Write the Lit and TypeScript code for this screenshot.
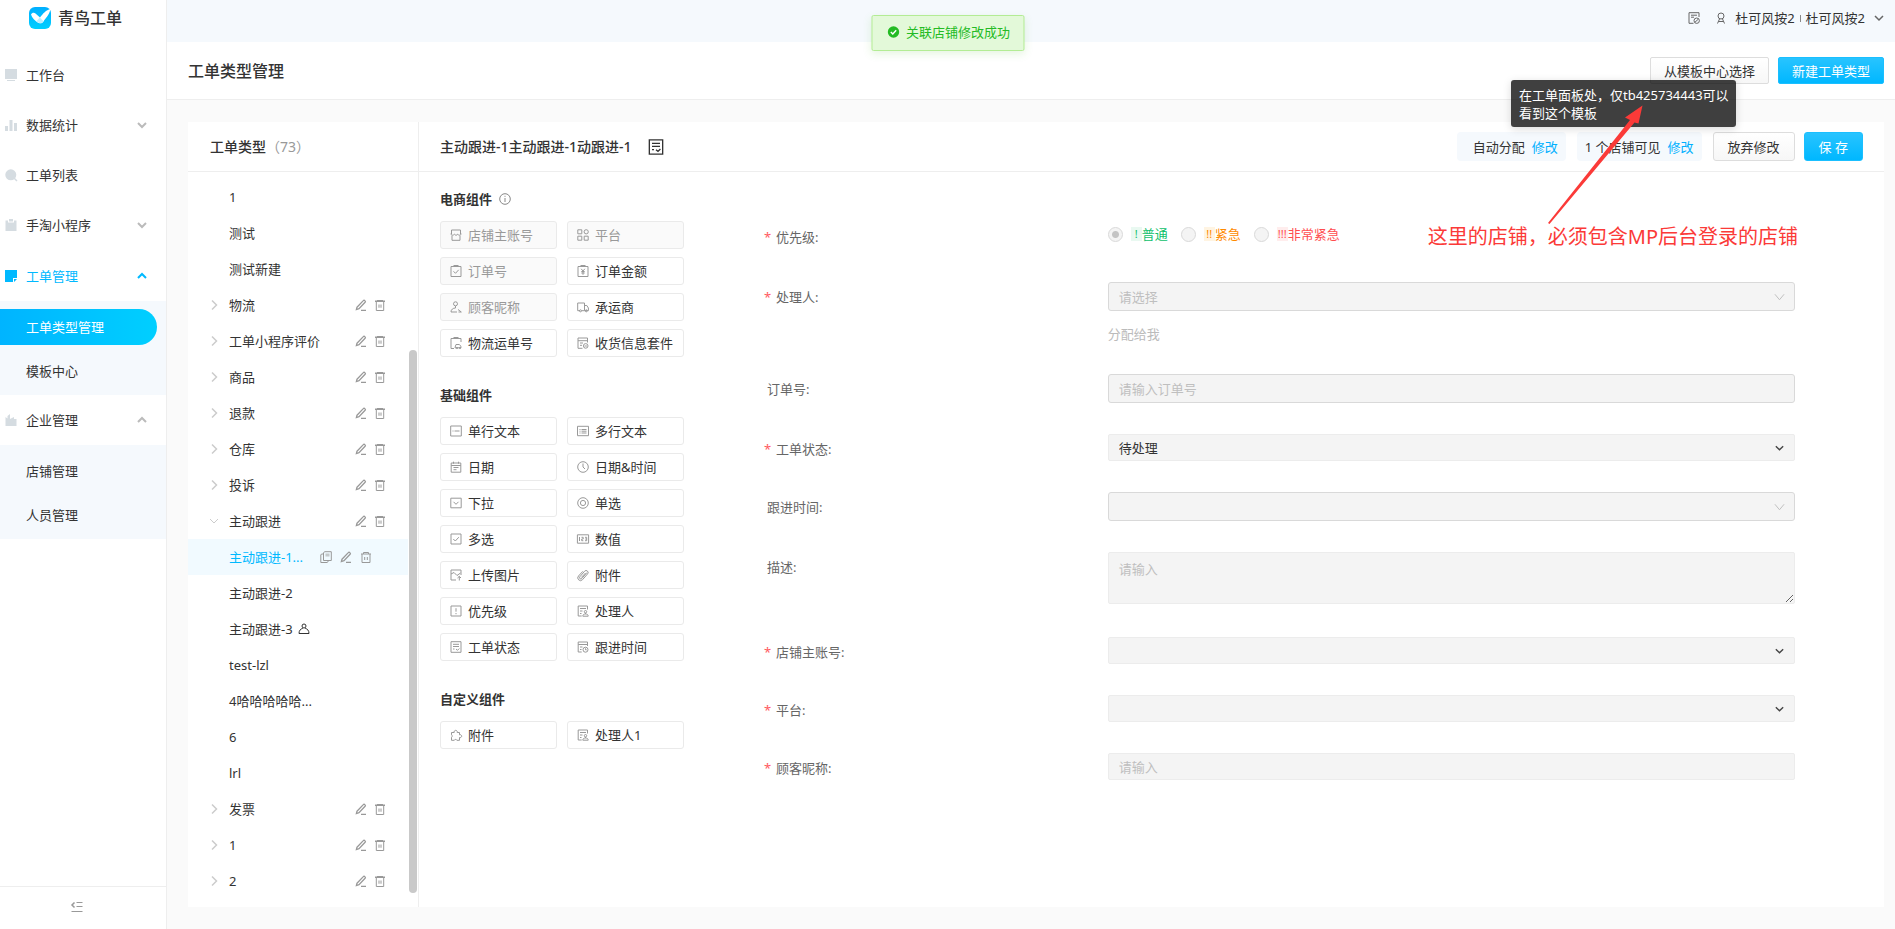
import { LitElement, html, svg, css, nothing } from "lit";
import { customElement } from "lit/decorators.js";
import { classMap } from "lit/directives/class-map.js";

const paths: Record<string, unknown> = {
  down: svg`<path d="M2 4l4 4 4-4"/>`,
  wide: svg`<path d="M1 3l5 6 5-6"/>`,
  up: svg`<path d="M2 8l4-4 4 4"/>`,
  right: svg`<path stroke-width="1.500" d="M4 1.500l4.500 4.500L4 10.500"/>`,
  monitor: svg`<path class="fill" d="M0 0h12v10H0zM2 11h8v1H2z"/>`,
  chart: svg`<path class="fill" d="M0 7h3v5H0zM4.500 1h3v11h-3zM9 4h3v8H9z"/>`,
  search: svg`<circle class="fill" cx="5.800" cy="5.800" r="5.500"/><path d="M9 9l3 3" stroke-width="1.500"/>`,
  clip: svg`<path class="fill" d="M.5 1.500H3v2h6v-2h2.500V12H.5zM4 0h4v2.500H4z"/>`,
  note: svg`<path class="fill" d="M0 0h12v8H8v4H0zM9 9h3l-3 3z"/>`,
  factory: svg`<path class="fill" d="M.5 12V3l2 1.500V2L5 0v5l4-2v2h2.500v7z"/>`,
  edit: svg`<path stroke-width="1.300" d="M2 8.200L8.300 1.600a1 1 0 0 1 1.500 0l.3.300a1 1 0 0 1 0 1.400L4 9.700l-2.600.8zM6 11.300h5"/>`,
  trash: svg`<path d="M1 2.500h10M3 1.500h6M2.300 2.500v9h7.400v-9"/><path class="fill soft" d="M1 1h10v2H1zM4 5.500h4v3.200H4z"/>`,
  bin: svg`<path d="M1 3h10M3.500 3V1.500h5V3M2 3v8.500h8V3M4.700 6v3M7.300 6v3"/>`,
  copy: svg`<path d="M4.500.7h6.800v8.800H3.500V2zM3.500 3H1.500L.8 4v7.500h6.500l1-1.500"/><path class="fill soft" d="M5.500 2.500h4v3h-4z"/>`,
  person: svg`<circle cx="6" cy="3" r="2"/><path d="M4.800 5.300C2.500 6 1 7.500 1 10.500h10C11 7.500 9.500 6 7.200 5.300"/>`,
  user: svg`<circle cx="6" cy="4" r="3"/><path d="M2.500 11.500l2-4.500M9.500 11.500L7.500 7M3.500 9.500h5"/>`,
  docblock: svg`<path d="M11 5V.7H1v10.600h4.500M3 3.200h6M3 5.200h3"/><circle cx="8.700" cy="8.700" r="2.700"/><path d="M7 10.200l3.300-3"/>`,
  form: svg`<path d="M1 .7h10v10.600H1zM3 3.300h6M3 5.500h6M3 8h1.500M6 8l1.500 1.300L9.300 7.500"/>`,
  info: svg`<circle cx="6" cy="6" r="5.300"/><path d="M6 5v4M6 2.800v1"/>`,
  shop: svg`<path d="M1.500 5V1h9v4M1 5.200c.5 1.300 2.500 1.300 3.300 0 .8 1.300 2.700 1.300 3.500 0 .8 1.300 2.700 1.300 3.200 0V4.500M1 4.500v.7M2 6.500v4.800h8V6.500"/>`,
  grid: svg`<path d="M.8.800h4v4h-4zM.8 7.200h4v4h-4zM7.200 7.200h4v4h-4z"/><circle cx="9.200" cy="2.800" r="2.100"/>`,
  ordercheck: svg`<path d="M1 1.500h10v10H1zM3.500.5h5M3.500 6.300l2 2 3.200-3.500"/>`,
  yen: svg`<path d="M1 1.500h10v10H1zM3.500.5h5M4.200 3.800L6 6l1.800-2.200M6 6v3.800M4.300 6.500h3.400M4.300 8h3.400"/>`,
  customer: svg`<circle cx="5.500" cy="2.800" r="2"/><path d="M5.500 5v2M5.500 7C3 7 1 8.500 1 11h6M8 8.500L11.300 11H8.500"/>`,
  truck: svg`<path d="M3 9.700H.7V2h6.800v7.700H4.600M7.500 4.500h2.300L11.400 7v2.700H7.500"/><circle cx="3.500" cy="9.800" r="1"/><circle cx="9.300" cy="9.800" r="1"/>`,
  waybill: svg`<path d="M4 11.500H1v-10h10V5M3.500.5h5M5 10.500l1-3h3.200l1.800 1.800v1.500H5z"/><circle cx="7" cy="11" r=".7"/><circle cx="10" cy="11" r=".7"/>`,
  receipt: svg`<path d="M10.500 5.500V1H1v10.300h4.500M1 3.700h9.500M3 6h3M3 8.300h2"/><circle cx="8.700" cy="8.900" r="2.300"/><path d="M7.500 9h2.400"/>`,
  line: svg`<path d="M.7 1h10.600v10H.7zM2.500 6h1M4.500 6h5"/>`,
  lines: svg`<path d="M.5 1.300h11v9.400H.5zM2.500 4.500h1M4.500 4.500h5M2.500 6.200h1M4.500 6.200h5M2.500 8h1M4.500 8h5"/>`,
  calendar: svg`<path d="M1.200 2h9.600v9.200H1.200zM1.200 4.500h9.600M3.500.700v2M8.500.700v2M3.500 6.500h5M3.500 8.700h3"/>`,
  clock: svg`<circle cx="6" cy="6" r="5.300"/><path d="M6 2.500V6l2 2"/>`,
  dropdown: svg`<path d="M.8 1.200h10.400v9.600H.8zM3.500 4.800L6 7.300l2.500-2.500"/>`,
  radio: svg`<circle cx="6" cy="6" r="5.300"/><circle cx="6" cy="6" r="2.600"/>`,
  check: svg`<path d="M1 1h10v10H1zM3.300 6l2 2 3.500-3.800"/>`,
  number: svg`<path d="M.4 1.800h11.200v8.400H.4zM2.500 4v4M4.500 4.300h1.700V6H4.700v1.700h1.600M8 4.300h1.700v3.400H8M8.200 6h1.500"/>`,
  image: svg`<path d="M6 11H1V1h10v5M1 5l3-1.500 3 3L10.500 4M9.300 11.500V7.500M7.500 9l1.800-1.700L11 9"/>`,
  attach: svg`<path d="M10 3.500L4.800 9.500a1.300 1.300 0 0 1-2-1.700L7.600 2.200a2 2 0 0 1 3 2.700L5.500 10.700a2.700 2.700 0 0 1-4-3.700L5.800 2.300M8.500 4L4.300 8.500"/>`,
  alert: svg`<path d="M1 1h10v10H1zM6 3.200v3.500M6 8v1.200"/>`,
  handler: svg`<path d="M10.500 4.500V1H1.200v10h3.500M3 3.500h6M3 6h2.500M3 8.500h1.500"/><circle cx="8.500" cy="6.700" r="1.200"/><path d="M8.500 8v1M5.800 11.200c0-1.500 1-2.200 2.700-2.200s2.700.7 2.700 2.200z"/>`,
  follow: svg`<path d="M10.500 5V1H1.200v10h3.500M1.200 3.500h9.300M3 6h2.500M3 8.500h1.500"/><circle cx="8.500" cy="8.700" r="2.500"/><path d="M8.500 7.300v1.500h1.200"/>`,
  puzzle: svg`<path d="M1.500 3.500h2.700a1.600 1.600 0 1 1 3 0H9.500v2.300a1.500 1.500 0 1 1 0 2.700v2.800H6.900a1.400 1.400 0 0 0-2.600 0H1.500V8.300a1.400 1.400 0 0 0 0-2.500z"/>`,
  collapse: svg`<path d="M5.500 1.500h6M5.500 5.500h6M.5 10.500h11"/><path stroke-width="1.500" d="M3.500 1.500L1 4l2.500 2.500"/>`,
};

const icon = (name: string, extra = "") => html`
  <svg class="icon ${extra}" viewBox="0 0 12 12" aria-hidden="true">${paths[name]}</svg>`;

type Row = { text: string; kind: "leaf" | "node" | "open" | "active"; mark?: boolean };
const leaf = (text: string, mark = false): Row => ({ text, kind: "leaf", mark });
const node = (text: string): Row => ({ text, kind: "node" });

const tree: Row[] = [
  leaf("1"), leaf("测试"), leaf("测试新建"),
  node("物流"), node("工单小程序评价"), node("商品"), node("退款"), node("仓库"), node("投诉"),
  { text: "主动跟进", kind: "open" },
  { text: "主动跟进-1...", kind: "active" },
  leaf("主动跟进-2"), leaf("主动跟进-3", true), leaf("test-lzl"), leaf("4哈哈哈哈哈..."), leaf("6"), leaf("lrl"),
  node("发票"), node("1"), node("2"),
];

type Part = [string, string, boolean?];
const groups: { title: string; info?: boolean; parts: Part[] }[] = [
  {
    title: "电商组件", info: true, parts: [
      ["shop", "店铺主账号", true], ["grid", "平台", true],
      ["ordercheck", "订单号", true], ["yen", "订单金额"],
      ["customer", "顾客昵称", true], ["truck", "承运商"],
      ["waybill", "物流运单号"], ["receipt", "收货信息套件"],
    ],
  },
  {
    title: "基础组件", parts: [
      ["line", "单行文本"], ["lines", "多行文本"], ["calendar", "日期"], ["clock", "日期&时间"],
      ["dropdown", "下拉"], ["radio", "单选"], ["check", "多选"], ["number", "数值"],
      ["image", "上传图片"], ["attach", "附件"], ["alert", "优先级"], ["handler", "处理人"],
      ["form", "工单状态"], ["follow", "跟进时间"],
    ],
  },
  { title: "自定义组件", parts: [["puzzle", "附件"], ["handler", "处理人1"]] },
];

@customElement("app-root")
export class AppRoot extends LitElement {
  static styles = css`
    :host {
      display: flex;
      position: relative;
      min-height: 100vh;
      background: #fafafa;
      color: #333;
      font: 13px/20px "Noto Sans", "Noto Sans CJK SC", sans-serif;
    }
    * { box-sizing: border-box; }
    button, input, select, textarea { font: inherit; color: inherit; margin: 0; }
    a { color: inherit; text-decoration: none; }
    ul { list-style: none; margin: 0; padding: 0; }
    h1, h2, h3 { margin: 0; font-weight: 500; }
    .icon { width: 12px; height: 12px; flex: none; fill: none; stroke: currentColor; stroke-width: 1; overflow: visible; }
    .icon .fill { fill: currentColor; stroke: none; }
    .icon .soft { opacity: 0.5; }

    .side { display: flex; flex-direction: column; width: 167px; flex: none; background: #fff; border-right: 1px solid #eee; }
    .brand { display: flex; align-items: center; gap: 7px; height: 36px; padding-left: 29px; margin-bottom: 14px; font-size: 16px; font-weight: 500; }
    .logo { width: 22px; height: 22px; }
    .item { display: flex; align-items: center; gap: 9px; height: 50px; padding: 0 18px 0 5px; }
    .sub + .item, .item.on { margin-bottom: 0; }
    .item.on { height: 51px; }
    .item .icon { color: #d5dce1; }
    .item .label { flex: 1; }
    .item .arrow { color: #bbb; stroke-width: 2; }
    .item.on, .item.on .icon { color: #00b9ff; }
    .sub { display: flex; flex-direction: column; gap: 8px; padding: 8px 9px 6px 0; background: #f5f9fd; }
    .sub a { height: 36px; line-height: 36px; padding-left: 26px; }
    .sub a.on { color: #fff; border-radius: 0 18px 18px 0; background: linear-gradient(90deg, #00b4ff, #00cfff); }
    .fold { margin-top: auto; height: 43px; border: 0; border-top: 1px solid #eee; background: none; padding: 0 13px 0 0; color: #999; }

    .main { display: flex; flex-direction: column; flex: 1; min-width: 0; }
    .top { display: flex; align-items: center; justify-content: flex-end; height: 42px; padding: 0 10px 6px 0; background: #f5f9fd; }
    .top .icon { color: #666; }
    .top .arrow { color: #666; stroke-width: 1.5; }
    .top .user { display: flex; align-items: center; margin-left: 15px; gap: 8px; }
    .divide { width: 1px; height: 7px; background: #888; }
    .pair { display: flex; align-items: center; gap: 5px; }
    .head { display: flex; align-items: center; gap: 9px; height: 58px; padding: 0 11px 0 21px; background: #fff; border-bottom: 1px solid #eee; }
    .head h1 { flex: 1; font-size: 16px; }
    .btn { height: 29px; border: 1px solid #ddd; border-radius: 3px; background: linear-gradient(#fff, #f7f7f7); padding: 0 14px; line-height: 18px; }
    .head .btn { height: 27px; border-radius: 2px; padding: 0 13px; }
    .btn.primary { border-color: #1abfff; background: linear-gradient(#28c4ff, #00b7ff); color: #fff; }

    .panel { display: flex; flex: 1; margin: 22px 11px 22px 21px; background: #fff; }
    .types { position: relative; width: 231px; flex: none; border-right: 1px solid #eee; }
    .bar { display: flex; align-items: center; height: 50px; border-bottom: 1px solid #eee; }
    .bar h2 { font-size: 14px; }
    .types .bar { padding-left: 22px; }
    .count { color: #999; font-weight: 400; }
    .tree { padding: 7px 10px 7px 0; }
    .row { display: flex; align-items: center; height: 36px; padding: 0 22px 0 20px; }
    .row .twist { width: 21px; flex: none; display: flex; color: #ccc; }
    .row .name { flex: 1; display: flex; align-items: center; gap: 5px; white-space: nowrap; }
    .row .acts { display: flex; gap: 7px; color: #999; }
    .acts button { display: flex; padding: 0; border: 0; background: none; }
    .row.active { background: #f1faff; padding-right: 36px; }
    .row.active .name { color: #00b9ff; }
    .row.active .acts { gap: 8px; }
    .thumb { position: absolute; right: 1px; top: 228px; bottom: 14px; width: 8px; border-radius: 4px; background: #c9c9c9; }

    .work { flex: 1; min-width: 0; }
    .work .bar { padding: 0 21px; gap: 11px; }
    .bar .title { display: flex; align-items: center; gap: 16px; flex: 1; }
    .bar .title .icon { width: 16px; height: 16px; }
    .chip { display: flex; align-items: center; gap: 7px; height: 29px; padding: 0 8px; border-radius: 4px; background: #f5f9fd; }
    .chip.wide { padding-left: 16px; }
    .chip a { color: #00b0ff; }
    .pair.buttons { gap: 9px; }
    .body { display: flex; }
    .palette { width: 265px; flex: none; padding: 17px 0 0 21px; display: flex; flex-direction: column; gap: 28px; }
    .palette h3 { display: flex; align-items: center; gap: 7px; height: 20px; margin-bottom: 12px; font-size: 13px; font-weight: 700; }
    .palette h3 .icon { color: #888; }
    .parts { display: grid; grid-template-columns: 1fr 1fr; gap: 8px 10px; }
    .part { display: flex; align-items: center; gap: 6px; height: 28px; padding: 0 0 0 9px; border: 1px solid #eaeaea; border-radius: 3px; background: #fff; line-height: 18px; white-space: nowrap; }
    .part .icon { color: #999; }
    .part:disabled { background: #fafafa; color: #999; }

    .form { flex: 1; padding: 50px 89px 0 80px; display: flex; flex-direction: column; gap: 30px; }
    .field { display: grid; grid-template-columns: 1fr 2fr; align-items: start; }
    .caption { display: flex; align-items: center; height: 29px; padding-left: 3px; color: #666; }
    .caption.must { padding-left: 0; }
    .caption.must::before { content: "*"; width: 12px; color: #ff5a5f; }
    .wrap { position: relative; display: flex; }
    .wrap .icon { position: absolute; right: 10px; top: 50%; margin-top: -6px; color: #bbb; width: 11px; }
    .wrap .icon.dark { color: #444; stroke-width: 1.5; }
    .box { width: 100%; height: 29px; padding: 0 10px; border: 1px solid #d9d9d9; border-radius: 3px; background: #f4f4f4; appearance: none; opacity: 1; }
    .box.flat { height: 27px; border-color: #ececec; border-radius: 2px; color: #333; }
    .box.tall { height: 52px; padding-top: 6px; resize: vertical; }
    .box::placeholder, .box.empty { color: #bfbfbf; }
    .tight { height: 28px; }
    .spaced { height: 30px; }
    .area { height: 55px; }
    .assign { display: block; width: max-content; margin-top: 13px; border: 0; padding: 0; background: none; line-height: 20px; color: #bbb; }
    .radios { display: flex; align-items: center; height: 24px; gap: 13px; }
    .radios label { display: flex; align-items: center; gap: 8px; height: 24px; }
    .radios input { appearance: none; width: 15px; height: 15px; border: 1px solid #d9d9d9; border-radius: 50%; background: #f4f4f4; }
    .radios input:checked { background: radial-gradient(circle, #c4c4c4 0 3px, #f4f4f4 4px); }
    .level { display: flex; align-items: center; line-height: 20px; }
    .mark { width: 11px; line-height: 14px; text-align: center; font-size: 11px; }
    .low { color: #0fbf6b; } .low .mark { background: #e9f9f1; }
    .mid { color: #ff8a00; } .mid .mark { background: #fff4e2; }
    .high { color: #ff4d4f; } .high .mark { background: #ffeded; }

    .toast { position: absolute; top: 15px; left: 50%; transform: translateX(-50%); display: flex; align-items: center; gap: 7px; height: 36px; padding: 0 13px 3px 15px; border: 1px solid #b3ec94; border-radius: 2px; background: #e3f9d9; color: #24bb24; box-shadow: 0 3px 8px rgba(80, 190, 40, 0.15); white-space: nowrap; line-height: 20px; }
    .tip { position: absolute; top: 80px; right: 159px; width: 225px; padding: 6px 8px 5px; border-radius: 3px; background: rgba(0, 0, 0, 0.75); color: #fff; line-height: 18px; white-space: nowrap; box-shadow: 0 2px 8px rgba(0, 0, 0, 0.15); }
    .pointer { position: absolute; top: 105px; right: 252px; width: 95px; height: 119px; fill: #fb3a38; }
    .remark { position: absolute; top: 222px; right: 97px; font-size: 20px; line-height: 30px; color: #fb3a38; white-space: nowrap; }
  `;

  private row(r: Row) {
    const twist = r.kind === "node" ? icon("right") : r.kind === "open" ? icon("down") : nothing;
    return html`<li class=${classMap({ row: true, active: r.kind === "active" })}>
      <span class="twist">${twist}</span>
      <span class="name">${r.text}${r.mark ? icon("person") : nothing}</span>
      ${r.kind === "leaf" ? nothing : html`<span class="acts">
        ${r.kind === "active" ? html`<button aria-label="复制">${icon("copy")}</button>` : nothing}
        <button aria-label="编辑">${icon("edit")}</button>
        <button aria-label="删除">${icon(r.kind === "active" ? "bin" : "trash")}</button>
      </span>`}
    </li>`;
  }

  private item(glyph: string, label: string, arrow = "", on = false) {
    return html`<a href="#" class=${classMap({ item: true, on })}>
      ${icon(glyph)}<span class="label">${label}</span>${arrow ? icon(arrow, "arrow") : nothing}
    </a>`;
  }

  private field(id: string, label: string, must: boolean, control: unknown, size = "") {
    return html`<div class="field ${size}">
      <label class="caption ${must ? "must" : ""}" for=${id}>${label}:</label>
      <div>${control}</div>
    </div>`;
  }

  private select(id: string, flat: boolean, text = "", empty = false) {
    return html`<div class="wrap">
      <select id=${id} class=${classMap({ box: true, flat, empty })} disabled><option>${text}</option></select>
      ${flat ? icon("down", "dark") : icon("wide")}
    </div>`;
  }

  private level(cls: string, mark: string, text: string, id: string, checked = false) {
    return html`<label><input type="radio" name="level" id=${id} ?checked=${checked} disabled>
      <span class="level ${cls}"><span class="mark">${mark}</span>${text}</span></label>`;
  }

  render() {
    return html`
      <nav class="side">
        <div class="brand">
          <svg class="logo" viewBox="0 0 22 22" aria-hidden="true">
            <defs><linearGradient id="g" x2="0" y2="1"><stop stop-color="#00aeff"/><stop offset="1" stop-color="#00cfff"/></linearGradient></defs>
            <rect width="22" height="22" rx="6" fill="url(#g)"/>
            <path d="M2 7.500C3 5.500 5 5 6.500 6.500L11 10.500l-1.500 5.500C6 14 3 11 2 7.500z" fill="#fff"/>
            <path d="M21.500 2C17 3 14 6.500 11 10.500L7.500 14c2 2.500 5 3.500 7 .5C17 10 20 9 21.500 2z" fill="#fff"/>
            <path d="M11 10.500l3.500 3.700c-2 3-5 2.300-7-.2z" fill="#bdeeff"/>
          </svg>
          青鸟工单
        </div>
        ${this.item("monitor", "工作台")}
        ${this.item("chart", "数据统计", "down")}
        ${this.item("search", "工单列表")}
        ${this.item("clip", "手淘小程序", "down")}
        ${this.item("note", "工单管理", "up", true)}
        <div class="sub"><a href="#" class="on">工单类型管理</a><a href="#">模板中心</a></div>
        ${this.item("factory", "企业管理", "up")}
        <div class="sub"><a href="#">店铺管理</a><a href="#">人员管理</a></div>
        <button class="fold" aria-label="收起菜单">${icon("collapse")}</button>
      </nav>

      <div class="main">
        <header class="top">
          ${icon("docblock")}
          <div class="user">
            ${icon("user")}
            <span class="pair"><span>杜可风按2</span><i class="divide"></i><span>杜可风按2</span></span>
            ${icon("down", "arrow")}
          </div>
        </header>
        <div class="head">
          <h1>工单类型管理</h1>
          <button class="btn">从模板中心选择</button>
          <button class="btn primary">新建工单类型</button>
        </div>

        <main class="panel">
          <section class="types">
            <div class="bar"><h2>工单类型<span class="count">（73）</span></h2></div>
            <ul class="tree">${tree.map((r) => this.row(r))}</ul>
            <div class="thumb"></div>
          </section>

          <section class="work">
            <div class="bar">
              <h2 class="title">主动跟进-1主动跟进-1动跟进-1 ${icon("form")}</h2>
              <span class="chip wide">自动分配 <a href="#">修改</a></span>
              <span class="chip">1 个店铺可见 <a href="#">修改</a></span>
              <span class="pair buttons">
                <button class="btn">放弃修改</button>
                <button class="btn primary">保 存</button>
              </span>
            </div>
            <div class="body">
              <div class="palette">
                ${groups.map((g) => html`<div>
                  <h3>${g.title}${g.info ? icon("info") : nothing}</h3>
                  <div class="parts">
                    ${g.parts.map(([glyph, text, off]) => html`
                      <button class="part" ?disabled=${!!off}>${icon(glyph)}${text}</button>`)}
                  </div>
                </div>`)}
              </div>

              <form class="form">
                ${this.field("level-low", "优先级", true, html`<div class="radios">
                  ${this.level("low", "!", "普通", "level-low", true)}
                  ${this.level("mid", "!!", "紧急", "level-mid")}
                  ${this.level("high", "!!!", "非常紧急", "level-high")}
                </div>`, "spaced")}
                ${this.field("handler", "处理人", true, html`
                  ${this.select("handler", false, "请选择", true)}
                  <button type="button" class="assign" disabled>分配给我</button>`)}
                ${this.field("order", "订单号", false, html`<div class="wrap"><input id="order" class="box" placeholder="请输入订单号" disabled></div>`, "spaced")}
                ${this.field("status", "工单状态", true, this.select("status", true, "待处理"), "tight")}
                ${this.field("time", "跟进时间", false, this.select("time", false), "spaced")}
                ${this.field("desc", "描述", false, html`<div class="wrap"><textarea id="desc" class="box flat tall" placeholder="请输入" disabled></textarea></div>`, "area")}
                ${this.field("shop", "店铺主账号", true, this.select("shop", true), "tight")}
                ${this.field("platform", "平台", true, this.select("platform", true), "tight")}
                ${this.field("nick", "顾客昵称", true, html`<div class="wrap"><input id="nick" class="box flat" placeholder="请输入" disabled></div>`, "tight")}
              </form>
            </div>
          </section>
        </main>
      </div>

      <div class="toast" role="status">
        <svg class="icon" viewBox="0 0 12 12" aria-hidden="true"><circle class="fill" cx="6" cy="6" r="5.700"/><path d="M3.300 6l2 2 3.400-3.800" stroke="#fff" stroke-width="1.400"/></svg>
        关联店铺修改成功
      </div>
      <div class="tip" role="tooltip">在工单面板处，仅tb425734443可以<br>看到这个模板</div>
      <svg class="pointer" viewBox="0 0 95 119" aria-hidden="true">
        <path d="M94.500.5L77 12.500l5 2.500L0 118l1.500 1L86.500 17.500l4 1z"/>
      </svg>
      <div class="remark">这里的店铺，必须包含MP后台登录的店铺</div>
    `;
  }
}
